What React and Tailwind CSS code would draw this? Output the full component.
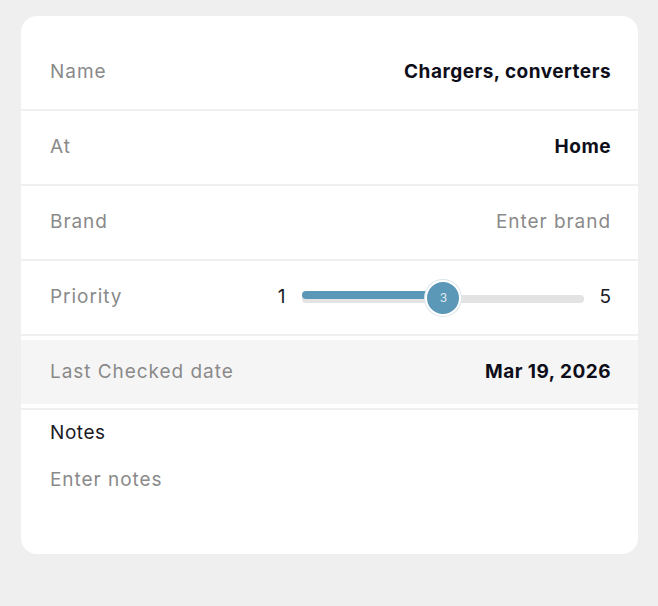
import { useState } from 'react';

const label = 'text-[19px] tracking-[0.05em] text-[#8a8a8a]';
const value = 'text-[19px] font-bold tracking-[0.025em] text-[#0e0e1a]';

function Row({ title, children }) {
  return (
    <div className="flex h-[75px] items-center justify-between border-b-2 border-[#f0f0f0] pl-[29px] pr-[27px]">
      <span className={label}>{title}</span>
      {children}
    </div>
  );
}

function PrioritySlider({ level, min = 1, max = 5 }) {
  const pct = ((level - min) / (max - min)) * 100;
  return (
    <div className="flex items-center text-[19px] text-[#1a1a24]">
      <span>{min}</span>
      <div className="relative ml-[17px] mr-[15px] h-[36px] w-[282px]">
        <div className="absolute left-0 right-0 top-[15px] h-[8px] rounded-full bg-[#e3e3e3]" />
        <div
          className="absolute left-0 top-[11px] h-[8px] rounded-full bg-[#5b97b6]"
          style={{ width: `${pct}%` }}
        />
        <div
          className="absolute top-0 flex h-[36px] w-[36px] -translate-x-1/2 items-center justify-center rounded-full border-2 border-white bg-[#5b97b6] text-[12px] text-white/80 shadow-[0_0_0_1px_#dce6ec]"
          style={{ left: `${pct}%` }}
        >
          {level}
        </div>
      </div>
      <span>{max}</span>
    </div>
  );
}

export default function App() {
  const [priority] = useState(3);

  return (
    <div
      className="min-h-[606px] bg-[#efefef] pl-[21px] pr-[20px] pt-[16px]"
      style={{ fontFamily: 'Inter, "Noto Sans", sans-serif' }}
    >
      <div className="rounded-[16px] bg-white pt-[20px]">
        <Row title="Name">
          <span className={value}>Chargers, converters</span>
        </Row>
        <Row title="At">
          <span className={value}>Home</span>
        </Row>
        <Row title="Brand">
          <span className={label}>Enter brand</span>
        </Row>
        <Row title="Priority">
          <PrioritySlider level={priority} />
        </Row>

        {/* Last checked */}
        <div className="border-b-2 border-[#f0f0f0] py-[4px]">
          <div className="flex h-[64px] items-center justify-between bg-[#f5f5f5] pl-[29px] pr-[27px]">
            <span className={label}>Last Checked date</span>
            <span className={value}>Mar 19, 2026</span>
          </div>
        </div>

        {/* Notes */}
        <div className="px-[29px] pb-[62px] pt-[11px]">
          <div className="text-[19px] leading-[24px] tracking-[0.03em] text-[#1a1a24]">Notes</div>
          <div className={`mt-[23px] leading-[24px] ${label}`}>Enter notes</div>
        </div>
      </div>
    </div>
  );
}
